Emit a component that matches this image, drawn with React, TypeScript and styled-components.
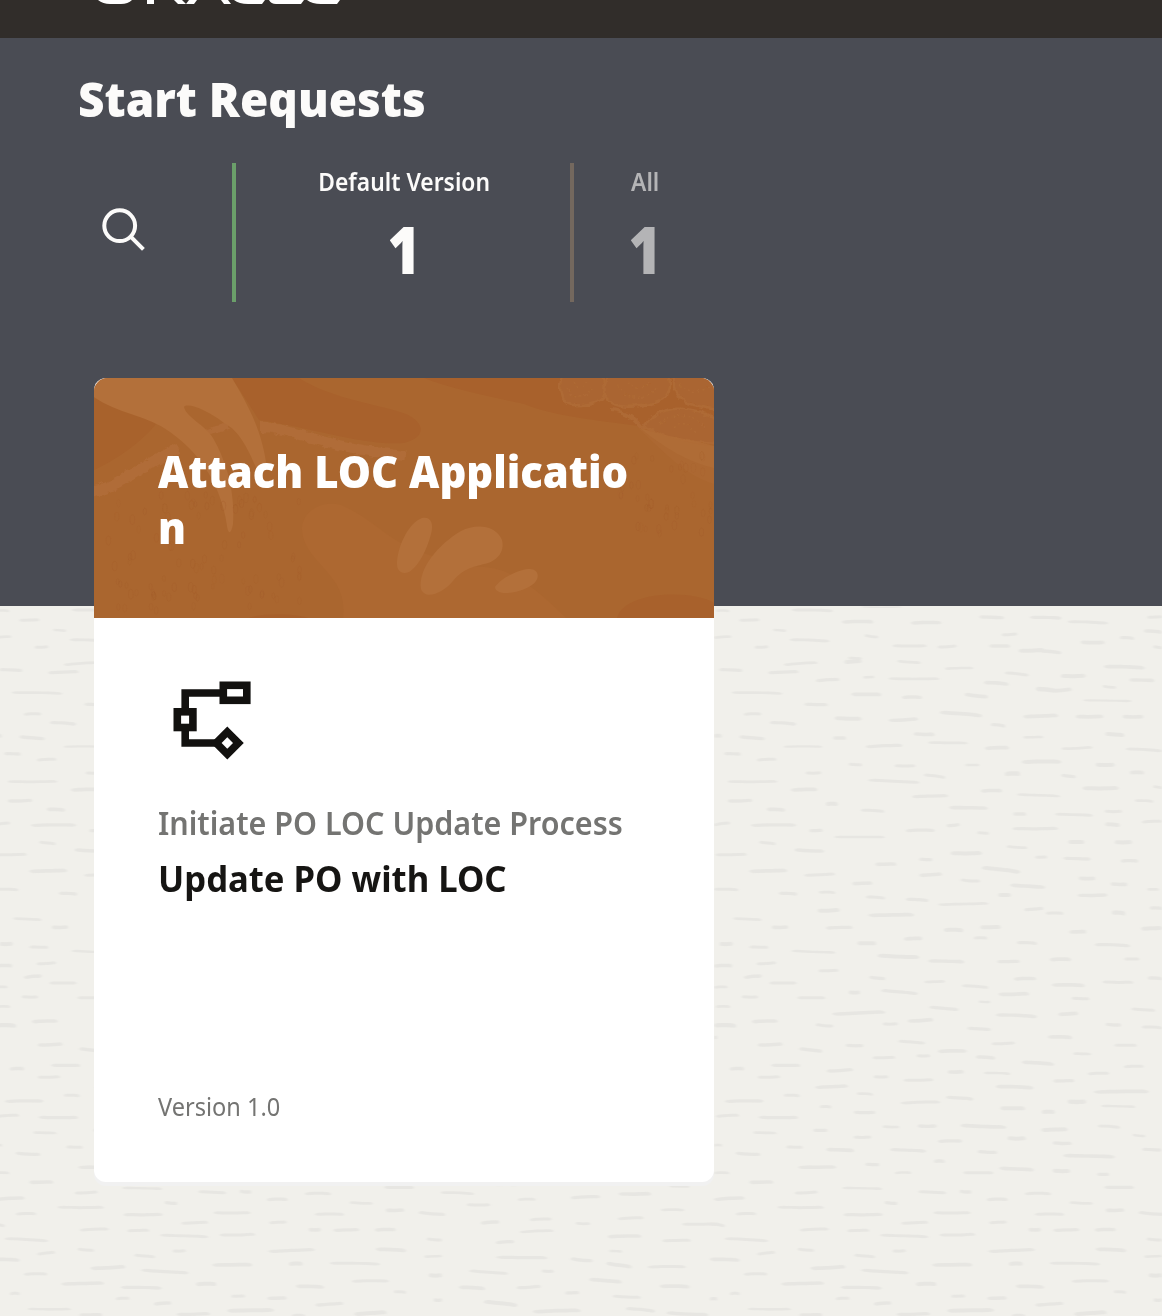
import React from "react";
import styled, { createGlobalStyle } from "styled-components";

const GlobalStyle = createGlobalStyle`
  *, *::before, *::after { box-sizing: border-box; }
  body { margin: 0; background: #f1f0eb; overflow: hidden; }
  h1, h2, h3, p { margin: 0; }
`;

const Page = styled.div`
  position: relative;
  height: 1316px;
  overflow: hidden;
  font-family: "Noto Sans", "Open Sans", sans-serif;
  color: #161513;
`;

const Texture = styled.svg`
  position: absolute;
  inset: 0;
  z-index: -1;
  display: block;
`;

const TopBar = styled.header`
  height: 38px;
  padding-left: 94px;
  background: #312d2a;
`;

const BrandSvg = styled.svg`
  display: block;
`;

const Banner = styled.section`
  height: 568px;
  padding: 28px 78px 0;
  background: #4a4c54;
`;

const Label = styled.span<{ $size: number; $weight: number; $narrow: number; $center?: boolean; $line: number; $color?: string }>`
  display: block;
  white-space: nowrap;
  font-size: ${(p) => p.$size}px;
  font-weight: ${(p) => p.$weight};
  line-height: ${(p) => p.$line}px;
  color: ${(p) => p.$color ?? "inherit"};
  transform: scaleX(${(p) => p.$narrow});
  transform-origin: ${(p) => (p.$center ? "center" : "left")};
`;

const Filters = styled.div`
  display: flex;
  height: 139px;
  margin-top: 31px;
`;

const SearchButton = styled.button`
  display: flex;
  width: 154px;
  padding: 42px 0 0 21px;
  border: 0;
  background: none;
`;

const Filter = styled.div<{ $width: number; $bar: string; $color: string; $inset?: number }>`
  display: flex;
  flex-direction: column;
  align-items: center;
  width: ${(p) => p.$width}px;
  padding-left: ${(p) => p.$inset ?? 0}px;
  border-left: 4px solid ${(p) => p.$bar};
  color: ${(p) => p.$color};
`;

const Card = styled.article`
  display: flex;
  flex-direction: column;
  width: 620px;
  height: 804px;
  border-radius: 12px;
  background: #fff;
  box-shadow: 0 4px 0 #f1f1f1;
`;

const CardShell = styled.main`
  position: relative;
  margin: -228px 0 0 94px;
`;

const CardHead = styled.div`
  position: relative;
  height: 240px;
  padding: 65px 64px 0;
  border-radius: 14px 14px 0 0;
  background: #aa662f;
  color: #fff;
  overflow: hidden;
`;

const Art = styled.svg`
  position: absolute;
  inset: 0;
`;

const CardTitle = styled.h2`
  position: relative;
`;

const CardBody = styled.div`
  display: flex;
  flex: 1;
  flex-direction: column;
  padding: 54px 64px 57px;
`;

const ProcessIcon = styled.svg`
  display: block;
  margin-bottom: 27px;
`;

const Footer = styled.div`
  margin-top: auto;
`;

/* Grain strokes: x start, x end, y start, y end, thickness; in thirds of a pixel. */
type Grain = [number, number, number, number, number];

const upper: Grain[] = [
  [18,58,62,63,8],[88,148,91,89,9],[190,228,120,122,8],[246,368,60,62,9],[455,575,51,51,4],[396,490,96,95,11],[603,694,99,98,10],[808,882,81,83,10],[960,1054,82,84,10],[1074,1194,95,99,9],[1312,1356,82,80,9],
  [12,64,143,140,8],[134,175,172,170,9],[240,358,149,153,9],[464,505,137,141,8],[548,650,167,167,9],[683,740,171,168,9],[875,922,134,132,9],[838,900,168,168,11],[1112,1184,157,157,11],[1230,1272,143,145,10],[1302,1356,123,126,11],[1330,1356,170,173,9],
  [926,1004,182,180,12],[990,1054,183,188,10],[222,323,224,218,8],[403,455,216,213,12],[415,455,204,205,7],[562,632,214,218,8],[705,790,236,234,8],[885,956,249,255,9],[1182,1304,230,233,11],[28,97,239,241,10],[175,266,248,245,10],[318,388,272,268,10],[460,493,262,261,8],[536,688,266,266,8],[822,896,278,282,11],[1052,1127,258,257,12],[1258,1333,270,271,11],[1178,1218,289,292,8],
  [978,1040,297,302,13],[1025,1085,302,298,11],[66,217,308,310,8],[424,514,313,313,11],[576,636,322,322,10],[764,834,314,320,11],[283,353,343,344,10],[1120,1265,331,333,7],[102,154,373,372,9],[180,258,398,402,10],[374,455,385,386,12],[536,624,391,387,10],[690,816,368,376,11],[940,1044,380,376,11],[1097,1180,380,379,11],[1238,1300,380,380,11],[843,886,404,408,10],
  [12,35,438,438,11],[88,164,441,446,10],[370,408,444,444,11],[611,674,432,433,11],[655,773,458,459,8],[940,1000,442,441,8],[1186,1243,432,435,12],[222,337,470,470,7],[468,577,470,466,10],[825,897,475,473,11],[1055,1148,476,472,8],[1248,1356,477,482,9],[43,92,491,492,10],[141,199,510,508,9],[416,456,523,524,9],[554,616,527,527,9],[766,808,525,525,8],[936,1054,516,515,12],[1157,1214,524,524,12],
  [287,334,549,548,9],[642,706,555,562,9],[885,930,552,551,14],[1054,1097,556,560,10],[1260,1302,548,548,11],[53,202,575,574,8],[475,628,571,577,9],[243,322,600,598,11],[813,876,603,602,11],[1118,1226,595,594,12],[1330,1356,590,593,8],[607,714,620,617,10],[922,1050,614,618,8],[53,127,633,631,10],[1275,1330,632,634,8],[348,383,642,642,12],[171,225,658,660,11],[453,523,661,664,9],[718,833,653,654,11],[910,948,672,672,11],[1184,1236,664,664,9],[1036,1148,673,676,9],
  [12,60,704,699,9],[123,258,706,705,10],[298,338,722,721,10],[588,674,722,721,10],[710,749,707,704,10],[908,1044,716,715,10],[1186,1229,703,705,12],[1296,1356,696,694,9],[373,525,741,741,8],[802,836,728,730,9],[148,197,757,761,9],[1075,1123,756,756,12],[1214,1266,757,756,12],[890,952,770,773,8],[254,342,780,783,11],[17,110,794,793,9],[722,816,790,789,12],[976,1011,802,801,9],[1060,1142,805,807,10],[1233,1284,813,813,10],[496,559,823,822,11],[628,667,808,809,10],
  [118,231,844,841,11],[283,375,856,852,9],[816,931,834,845,12],[628,696,856,852,11],[1106,1156,865,865,11],[752,810,870,873,9],[427,487,881,879,11],[901,1005,886,891,11],[1202,1252,882,883,11],[12,85,898,899,9],[207,261,910,912,10],[327,376,907,908,8],[865,902,915,915,12],[1103,1192,916,915,10],[1312,1346,898,898,8],[468,525,921,924,9],[588,655,928,931,10],[685,835,944,940,8],[323,389,962,960,12],[475,612,976,974,11],[943,1000,959,955,10],[1008,1060,970,970,9],[1206,1246,968,970,13],[1320,1356,954,955,10],
  [70,155,986,989,8],[185,235,1012,1011,11],[348,428,1014,1012,10],[702,760,1020,1021,12],[811,872,1012,1011,12],[1294,1356,1016,1014,12],[1078,1129,1026,1025,11],[792,832,1044,1044,9],[582,637,1047,1045,11],
];

const lower: Grain[] = [
  [29,68,12,11,12],[118,175,21,22,9],[245,376,33,37,8],[442,498,10,10,12],[921,981,8,10,10],[1155,1260,14,17,10],[503,628,47,51,12],[655,762,63,65,11],[862,929,65,64,10],[1020,1083,59,58,11],[1243,1288,57,57,9],[12,67,78,77,11],[140,198,71,68,9],[326,385,92,91,9],[102,155,112,108,10],[478,526,112,116,10],[912,978,117,116,10],[1314,1356,114,116,10],[178,260,129,129,9],[643,705,126,124,8],[756,835,137,142,9],[1026,1124,135,136,11],[1178,1270,126,127,9],
  [12,53,142,141,8],[416,450,157,157,11],[514,623,152,160,10],[866,957,163,161,11],[95,144,170,171,9],[262,346,173,173,9],[1085,1138,175,176,9],[806,841,185,186,7],[18,60,200,200,8],[658,745,202,208,10],[1264,1335,207,211,9],[367,526,222,216,11],[858,980,225,229,11],[1045,1104,223,220,11],[126,203,245,243,11],[593,670,243,239,11],[518,563,252,251,9],[317,370,254,258,9],[12,78,256,257,13],[1187,1233,253,255,10],[1296,1356,261,263,9],[772,842,265,268,10],
  [12,22,293,293,10],[1014,1086,291,292,11],[565,645,304,309,9],[143,218,315,312,11],[845,915,311,309,9],[407,460,316,317,10],[1213,1280,316,316,9],[268,337,327,333,11],[684,770,334,333,11],[488,555,353,352,9],[620,660,347,347,9],[798,855,351,354,10],[1090,1143,341,342,8],[936,1032,367,372,11],[184,271,376,376,10],[1242,1301,380,379,9],[60,102,387,386,11],[350,429,393,389,10],[713,761,396,395,11],[822,901,399,401,8],[1134,1197,401,400,9],[143,210,412,410,9],[491,535,410,410,9],[581,670,421,419,9],[1030,1093,423,422,10],
  [316,414,442,438,10],[858,970,440,443,11],[1152,1316,456,454,11],[222,269,466,467,9],[441,489,461,463,8],[708,790,472,477,10],[45,160,484,483,10],[573,690,489,486,9],[1073,1128,485,485,13],[871,945,505,505,12],[1174,1276,498,500,8],[330,364,500,501,9],[431,496,517,517,10],[996,1034,516,516,12],[18,87,529,526,9],[146,264,532,532,10],[518,568,560,561,8],[623,680,558,558,10],[752,889,557,561,11],[1164,1230,558,562,9],[310,352,571,571,10],[994,1073,570,568,12],[130,200,578,579,8],[1268,1306,585,588,8],[431,484,592,591,9],[893,947,595,595,12],[684,756,604,603,10],[1028,1085,609,610,10],
  [12,36,616,616,8],[229,278,621,622,9],[349,432,629,631,11],[541,648,629,633,10],[803,861,635,637,10],[1297,1354,628,630,10],[77,151,640,643,10],[1060,1214,647,650,11],[672,704,664,664,10],[466,508,673,674,10],[265,378,682,681,10],[868,971,685,689,11],[1028,1080,692,693,12],[12,58,699,699,8],[555,603,699,698,8],[760,850,698,698,9],[1162,1197,703,703,10],[118,190,727,726,11],[1183,1272,742,742,10],[397,516,744,746,8],[254,323,759,756,9],[625,708,755,758,9],[749,784,754,756,10],[945,1023,761,761,9],
  [12,104,778,774,10],[831,893,779,778,10],[524,562,788,790,10],[1079,1148,788,790,8],[203,341,802,802,9],[1187,1243,811,810,11],[78,138,822,821,9],[401,518,824,823,10],[671,782,818,818,9],[975,1062,823,823,9],[1286,1366,818,823,10],[574,654,850,847,9],[838,890,848,846,9],[0,44,853,857,9],[270,356,870,867,9],[412,477,872,871,9],[956,992,869,869,11],[1030,1107,871,869,10],[1155,1217,870,869,10],[511,655,886,890,9],[689,795,885,883,9],[45,174,896,902,9],[1310,1356,897,900,9],
  [263,312,928,931,9],[142,195,942,937,9],[548,587,933,932,9],[835,974,934,929,10],[1158,1248,928,931,11],[0,89,958,960,11],[433,495,946,950,9],[667,787,975,974,11],[897,938,972,971,12],[1020,1170,970,972,9],[1303,1356,950,948,8],[302,406,985,980,11],[454,595,991,998,10],[102,172,1003,1002,9],[1316,1356,1006,1006,12],[214,342,1032,1029,11],[618,679,1033,1032,12],[1086,1196,1024,1023,9],[393,515,1042,1044,10],[918,1002,1039,1041,11],[60,89,1061,1061,9],[1212,1248,1055,1057,9],[378,418,1076,1075,9],[724,765,1069,1068,9],[832,890,1075,1074,10],[0,22,1077,1077,10],[1331,1356,1080,1080,10],[492,544,1092,1089,10],[976,1060,1095,1090,10],[113,243,1107,1107,8],[712,852,1112,1110,12],[268,337,1125,1124,10],[560,660,1123,1121,10],[1093,1190,1122,1117,12],[906,945,1127,1127,9],
];

const middle: Grain[] = [
  [183,282,38,41,8],[260,331,74,74,9],[414,467,59,58,8],[573,660,53,50,10],[716,813,42,41,11],[345,408,16,16,6],[868,928,18,19,9],[450,515,119,117,9],[303,358,129,126,10],[587,630,130,131,8],[714,791,116,113,9],[843,913,90,90,8],[420,521,156,152,8],[348,402,188,185,10],[684,784,170,168,11],[847,932,182,181,9],[907,1020,133,132,9],[688,726,213,214,8],[349,502,232,233,10],[572,638,237,242,10],[679,755,251,260,11],[804,917,261,260,9],[485,521,273,274,9],[268,383,273,280,9],[237,315,322,325,11],[410,482,323,319,10],[628,725,299,305,11],[840,929,319,320,11],[556,597,339,338,10],[698,782,349,352,9],[312,412,366,375,12],[459,602,395,391,11],[738,825,386,393,10],[860,985,399,404,11],
];

const grainPath = ([x1, x2, y1, y2, w]: Grain) => {
  const h = w / 2;
  const len = x2 - x1;
  const at = (t: number) => x1 + len * t;
  const bend = ((x1 % 3) - 1) * 1.2;
  const my = (y1 + y2) / 2 + bend;
  return (
    `M${x1} ${y1}Q${x1 + 1} ${y1 - h} ${at(0.12)} ${y1 - h}` +
    `C${at(0.4)} ${my - h} ${at(0.6)} ${my - h} ${at(0.9)} ${y2 - h}` +
    `Q${x2} ${y2 - h * 0.6} ${x2} ${y2 + 1}Q${x2} ${y2 + h} ${at(0.9)} ${y2 + h}` +
    `C${at(0.6)} ${my + h} ${at(0.4)} ${my + h} ${at(0.12)} ${y1 + h}Q${x1} ${y1 + h * 0.7} ${x1} ${y1}Z`
  );
};

const toPath = (list: Grain[]) => list.map(grainPath).join("");
const upperPath = toPath(upper);
const lowerPath = toPath(lower);

const WoodTexture = () => (
  <Texture width="1162" height="1316" viewBox="0 0 1162 1316" aria-hidden="true">
    <defs>
      <filter id="soft" x="0" y="0" width="1" height="1">
        <feGaussianBlur stdDeviation="1.1 0.7" />
      </filter>
    </defs>
    <g fill="#e7e6e2" filter="url(#soft)">
      <path d={upperPath} transform="translate(710 590) scale(.33333)" />
      <path d={lowerPath} transform="translate(710 940) scale(.33333)" />
      <path d={upperPath} transform="translate(-10 590) scale(.33333)" />
      <path d={lowerPath} transform="translate(-10 940) scale(.33333)" />
      <path d={toPath(middle)} transform="translate(380 1180) scale(.33333)" />
    </g>
  </Texture>
);

const noise = (n: number) => {
  const v = Math.sin(n * 127.1 + 11.7) * 43758.5453;
  return v - Math.floor(v);
};

const specks = Array.from({ length: 130 }, (_, i) => {
  const left = i < 90;
  return {
    x: left ? 8 + noise(i) * 200 : 525 + noise(i) * 92,
    y: left ? 115 + noise(i + 500) * 122 : 75 + noise(i + 500) * 85,
    o: 0.08 + noise(i + 900) * 0.16,
    r: 1.4 + noise(i + 1300),
  };
});

const HeadArt = () => (
  <Art width="620" height="240" viewBox="0 0 620 240" aria-hidden="true">
    <defs>
      <filter id="rough" x="-5%" y="-20%" width="110%" height="140%">
        <feTurbulence type="fractalNoise" baseFrequency="0.11 0.16" numOctaves="3" seed="4" result="n" />
        <feDisplacementMap in="SourceGraphic" in2="n" scale="6" xChannelSelector="R" yChannelSelector="G" />
        <feGaussianBlur stdDeviation="0.6" />
      </filter>
    </defs>
    <path fill="#a8612c" d="M138 0H205C240 22 285 26 312 36C332 45 332 60 310 65C270 68 220 50 165 42Z" />
    <path fill="#a8622c" d="M0 20C25 32 48 33 62 46C46 66 18 84 0 92Z" />
    <path fill="#a8612c" d="M330 0H620V64C590 60 570 56 545 48C500 42 460 38 430 26C395 18 360 12 330 0Z" />
    <path fill="#ad6831" d="M208 152C207 136 225 121 247 127C276 139 294 162 322 172L370 190C388 187 405 190 418 197C438 207 458 226 472 240H249C255 195 210 186 208 152Z" />
    <g filter="url(#rough)" fill="none" stroke="#b06c38">
      <path d="M-3 114C20 112 50 86 85 70" strokeWidth="11" />
      <path d="M112 54L134 48" strokeWidth="6" />
      <path d="M166 49C198 49 218 67 311 78" strokeWidth="10" />
    </g>
    <g filter="url(#rough)" fill="#aa6530" stroke="#ae6a36" strokeWidth="2.500">
      <path d="M468 -3C460 30 480 32 506 22C516 15 509 5 508 -3Z" />
      <path d="M514 -3C500 30 530 32 558 26C578 20 578 8 574 -3Z" />
      <path d="M580 -3C576 28 604 28 624 32V-3Z" />
      <path d="M550 49C562 27 592 26 622 40V66C598 64 570 62 550 49Z" />
      <path fill="none" strokeWidth="1.500" strokeDasharray="2 3" d="M474 11C480 24 492 20 498 10M523 8C535 24 555 22 564 8M566 46C580 32 600 36 612 52M586 6C596 18 610 14 622 4M480 4C486 12 490 10 494 2M534 4C540 12 550 12 556 4M580 50C590 42 596 46 602 56" />
      <path fill="none" strokeWidth="4" d="M516 32C528 32 538 38 548 50" />
    </g>
    <path fill="#ac6832" d="M544 50C570 56 590 66 620 68V106C592 98 572 76 544 50Z" />
    <path fill="#b06d38" opacity=".7" d="M546 50C570 58 600 62 620 68V90C594 84 570 70 546 50Z" />
    <path fill="#b3703a" d="M0 0H138C152 24 169 52 173 92H163C151 63 142 51 130 45C114 32 93 24 90 29C92 39 111 47 119 60C134 86 141 116 139 146C137 157 134 156 133 148C128 112 110 78 76 54C55 38 22 35 0 19Z" />
    <path fill="#b3703a" d="M303 186C303 170 314 145 328 140C337 138 340 146 337 156C333 172 324 189 315 194C308 197 303 193 303 186Z" />
    <path fill="#b3703a" d="M327 211C324 190 345 166 367 153C382 145 402 147 408 162C411 174 403 182 394 185C380 189 371 189 359 203C348 216 331 222 327 211Z" />
    <path fill="#b3703a" d="M401 209C407 200 424 192 434 191C443 190 446 197 442 203C436 213 402 221 401 209Z" />
    <path fill="#a8612c" d="M523 240C531 212 600 212 620 225V240Z" />
    <path fill="#a8612c" d="M155 240C165 235 200 235 214 240Z" />
    {specks.map((s, i) => (
      <ellipse key={i} cx={s.x} cy={s.y} rx={s.r} ry={s.r * 2} fill="none" stroke="#a0592a" strokeWidth="1" opacity={s.o} />
    ))}
  </Art>
);

const BrandMark = () => (
  <BrandSvg width="250" height="6" viewBox="0 0 250 6" role="img" aria-label="Oracle">
    <g fill="#fff">
      <path d="M4 0H38Q34 4 27 4H16Q9 4 4 0Z" />
      <path d="M53 0H60V4H53Z" />
      <path d="M80 0H88L92 4H84Z" />
      <path d="M95 0H103L100 4H92Z" />
      <path d="M127 0H134L137 4H130Z" />
      <path d="M140 0H171L168 4H154Q145 4 140 0Z" />
      <path d="M175 0H210L207 4H182Q177 4 175 0Z" />
      <path d="M213 0H246L243 4H227Q218 4 213 0Z" />
    </g>
  </BrandSvg>
);

export default function App() {
  return (
    <>
      <GlobalStyle />
      <Page>
        <WoodTexture />
        <TopBar>
          <BrandMark />
        </TopBar>
        <Banner>
          <h1>
            <Label $size={48} $weight={900} $narrow={0.957} $line={66} $color="#fcfbfa">Start Requests</Label>
          </h1>
          <Filters>
            <SearchButton aria-label="Search">
              <svg width="50" height="50" viewBox="0 0 50 50" fill="none" stroke="#fcfbfa" strokeWidth="4">
                <circle cx="20.700" cy="20.700" r="15.400" />
                <path d="M31.700 31.700L44.400 44.400" />
              </svg>
            </SearchButton>
            <Filter $width={338} $bar="#6b9f6a" $color="#fcfbfa" $inset={2}>
              <Label $size={24.5} $weight={600} $narrow={0.932} $center $line={38}>Default Version</Label>
              <Label $size={65} $weight={900} $narrow={0.87} $center $line={96}>1</Label>
            </Filter>
            <Filter $width={146} $bar="#74685e" $color="#b4b4b6">
              <Label $size={24.5} $weight={600} $narrow={0.932} $center $line={38}>All</Label>
              <Label $size={65} $weight={900} $narrow={0.87} $center $line={96}>1</Label>
            </Filter>
          </Filters>
        </Banner>
        <CardShell>
          <Card>
            <CardHead>
              <HeadArt />
              <CardTitle>
                <Label $size={44} $weight={900} $narrow={0.95} $line={56}>Attach LOC Applicatio<br />n</Label>
              </CardTitle>
            </CardHead>
            <CardBody>
              <ProcessIcon width="96" height="96" viewBox="158 672 96 96" fill="none" stroke="#12110f" strokeWidth="7.600">
                <path d="M220 693H185.200V709M185.200 731V743H217" />
                <rect x="223.300" y="685.300" width="23.500" height="15" />
                <rect x="177.300" y="711.800" width="15.600" height="15.700" />
                <path d="M227.300 731.900L238.400 743L227.300 754.100L216.200 743Z" />
              </ProcessIcon>
              <Label $size={32.5} $weight={600} $narrow={0.938} $line={56} $color="#747472">Initiate PO LOC Update Process</Label>
              <Label $size={36.5} $weight={700} $narrow={0.95} $line={55}>Update PO with LOC</Label>
              <Footer>
                <Label $size={24.5} $weight={400} $narrow={0.962} $line={36} $color="#747472">Version 1.0</Label>
              </Footer>
            </CardBody>
          </Card>
        </CardShell>
      </Page>
    </>
  );
}
